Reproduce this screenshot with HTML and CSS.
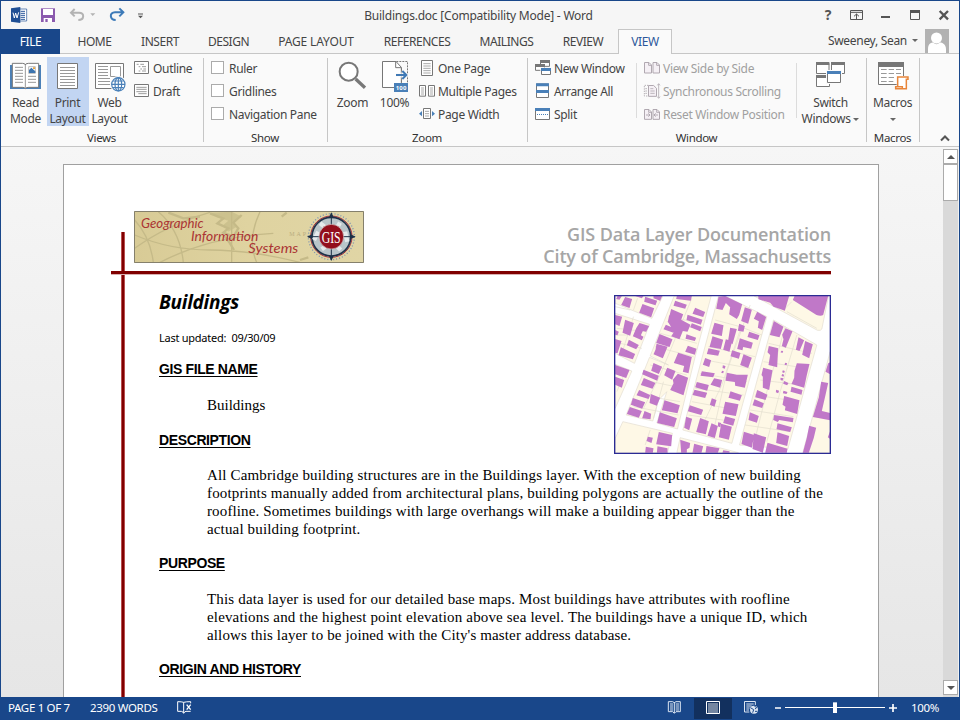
FILE: index.html
```
<!DOCTYPE html>
<html lang="en">
<head>
<meta charset="utf-8">
<title>Buildings.doc [Compatibility Mode] - Word</title>
<link rel="stylesheet" href="styles.css">
</head>
<body>
<div class="window">
  <header class="titlebar">
    <div class="quick">
      <svg width="18" height="28" viewBox="30 3 54 84"><path d="M57 27H80V63H57" fill="#fff" stroke="#1f4f94" stroke-width="2"/><path d="M62 34h13M62 40h13M62 46h13M62 52h13M62 58h13" stroke="#2b579a" stroke-width="3"/><path d="M33 25 61 21V69L33 65Z" fill="#1f4f94"/><path d="M39 38l4 16 4-15 4 15 5-17" fill="none" stroke="#fff" stroke-width="3"/></svg>
      <svg class="save" width="16" height="28" viewBox="120 3 48 84"><path d="M123 25H165V66H123Z" fill="#8b5aae"/><path d="M129 27H159V45H129ZM131 54H156V66H131Z" fill="#fff"/><path d="M136 57H143V66H136Z" fill="#8b5aae"/></svg>
      <svg class="undo" width="30" height="28" viewBox="204 3 90 84"><path d="M224 27 213 38 224 49M214 38H237C255 38 253 60 235 60" fill="none" stroke="#b3b3b3" stroke-width="6"/><path d="M271 40H286L278 48Z" fill="#b3b3b3"/></svg>
      <svg class="redo" width="18" height="28" viewBox="324 3 54 84"><path d="M358 25 370 37 358 49M369 37H345C327 37 329 60 347 60" fill="none" stroke="#3d7ab8" stroke-width="6"/></svg>
      <svg class="more" width="10" height="28" viewBox="408 3 30 84"><path d="M414 42H429" stroke="#555" stroke-width="3"/><path d="M414 47H429L421.500 55Z" fill="#555"/></svg>
    </div>
    <h1 class="title">Buildings.doc [Compatibility Mode] - Word</h1>
    <div class="controls">
      <span class="help">?</span>
      <svg width="15" height="28" viewBox="627 3 45 84"><path d="M631.500 31.500H667.500V58.500H631.500ZM631 37H668" fill="none" stroke="#555" stroke-width="3"/><path d="M649.500 57V42M642 49 649.500 42 657 49" fill="none" stroke="#555" stroke-width="3"/></svg>
      <svg class="min" width="11" height="28" viewBox="720 3 33 84"><path d="M723 51H750" stroke="#555" stroke-width="6"/></svg>
      <svg class="max" width="12" height="28" viewBox="807 3 36 84"><path d="M811.500 33H838.500V58.500H811.500Z" fill="none" stroke="#555" stroke-width="3"/><path d="M810 34.500H840" stroke="#555" stroke-width="9"/></svg>
      <svg class="close" width="12" height="28" viewBox="894 3 36 84"><path d="M899 33 924 58M924 33 899 58" stroke="#555" stroke-width="7"/></svg>
    </div>
  </header>
  <nav class="tabs">
    <span class="file">FILE</span>
    <span>HOME</span><span>INSERT</span><span>DESIGN</span><span class="wide">PAGE LAYOUT</span><span>REFERENCES</span><span>MAILINGS</span><span>REVIEW</span><span class="active">VIEW</span>
    <div class="account"><span>Sweeney, Sean</span><i class="caret"></i>
      <svg width="24" height="24" viewBox="0 0 24 24"><path d="M0 0H24V24H0Z" fill="#b2b2b2"/><circle cx="11.500" cy="9" r="5.500" fill="#fff"/><path d="M3 24V20C3 14 7 13.500 8 13.500Q11.500 17 15 13.500C17 13.500 21 15 21 20V24Z" fill="#fff"/></svg>
    </div>
  </nav>
  <section class="ribbon">
    <div class="group views">
      <div class="tools">
        <div class="big"><svg width="42" height="33" viewBox="15 180 126 99"><path d="M30 195H123V267H30Z" fill="#4a80b8"/><path d="M37 190H67Q76 190 76 195Q76 190 86 190H116V262H86Q78 262 76 266Q74 262 67 262H37Z" fill="#fff" stroke="#777" stroke-width="3"/><path d="M76 195V264" stroke="#999" stroke-width="3"/><path d="M45 202H69M45 211H69M45 220H69M45 229H69M45 238H69M45 247H69M84 229H108M84 238H108M84 247H108" stroke="#999" stroke-width="3"/><path d="M86 200H106V220H86Z" fill="#fff" stroke="#999" stroke-width="2"/><path d="M87 219V210L94 203L106 214V219Z" fill="#3d75b0"/><path d="M99 202H105V207H99Z" fill="#e8a33d"/></svg><span>Read<br>Mode</span></div>
        <div class="big selected"><svg width="42" height="33" viewBox="141 180 126 99"><path d="M172.500 190.500H232.500V265.500H172.500Z" fill="#fff" stroke="#777" stroke-width="3"/><path d="M180 202.500H225M180 211.500H225M180 220.500H225M180 229.500H225M180 238.500H225M180 247.500H225M180 256.500H225" stroke="#999" stroke-width="3"/></svg><span>Print<br>Layout</span></div>
        <div class="big"><svg width="42" height="33" viewBox="267 180 126 99"><path d="M286.500 190.500H370.500V265.500H286.500Z" fill="#fff" stroke="#777" stroke-width="3"/><path d="M294 199.500H324M294 208.500H324M294 217.500H324M294 226.500H324M294 235.500H330M294 244.500H330M294 253.500H330" stroke="#999" stroke-width="3"/><path d="M331.500 199.500H361.500V229.500H331.500Z" fill="#fff" stroke="#999" stroke-width="3"/><circle cx="355" cy="253" r="25" fill="#fafafa"/><circle cx="355" cy="253" r="21" fill="#fff"/><g fill="none" stroke="#4a80b8" stroke-width="3.500"><circle cx="355" cy="253" r="20"/><ellipse cx="355" cy="253" rx="10" ry="20"/><path d="M355 233V273M335 253H375M339 243H371M339 263H371"/></g></svg><span>Web<br>Layout</span></div>
        <div class="list">
          <div class="row"><svg width="16" height="23" viewBox="402 171 48 69"><path d="M403.500 184.500H445.500V220.500H403.500Z" fill="#fff" stroke="#777" stroke-width="3"/><path d="M410 193H416M421 193H432M416 200H421M426 200H438M421 207H426M430 207H438M416 213H421M426 213H438" stroke="#888" stroke-width="2.500"/></svg><span>Outline</span></div>
          <div class="row"><svg width="16" height="23" viewBox="402 240 48 69"><path d="M403.500 253.500H445.500V289.500H403.500Z" fill="#fff" stroke="#777" stroke-width="3"/><path d="M409 262H440M409 268H440M409 275H440M415 281H440" stroke="#888" stroke-width="2.500"/></svg><span>Draft</span></div>
        </div>
      </div>
      <h2>Views</h2>
    </div>
    <div class="group show">
      <div class="tools"><div class="list">
        <div class="row"><i class="box"></i><span>Ruler</span></div>
        <div class="row"><i class="box"></i><span>Gridlines</span></div>
        <div class="row"><i class="box"></i><span>Navigation Pane</span></div>
      </div></div>
      <h2>Show</h2>
    </div>
    <div class="group zoom">
      <div class="tools">
        <div class="big"><svg width="42" height="33" viewBox="36 180 126 99"><path d="M107 237 135 263" stroke="#777" stroke-width="10"/><circle cx="86" cy="215" r="27" fill="#fff" stroke="#777" stroke-width="6"/></svg><span>Zoom</span></div>
        <div class="big"><svg width="42" height="33" viewBox="162 180 126 99"><path d="M187.500 184.500H228L244 202V262.500H187.500Z" fill="#fff" stroke="#777" stroke-width="3"/><path d="M227 184V203H244" fill="none" stroke="#777" stroke-width="3"/><path d="M229 184.500H262.500V252M244.500 205V250" fill="none" stroke="#777" stroke-width="3" stroke-dasharray="6 3"/><path d="M228 225H258M247 213 259 225 247 237" fill="none" stroke="#fafafa" stroke-width="10"/><path d="M228 225H258M247 213 259 225 247 237" fill="none" stroke="#4079b5" stroke-width="6"/><path d="M222 249H264V276H222Z" fill="#4a80b8"/><text class="badge" x="227" y="270" textLength="32">100</text></svg><span>100%</span></div>
        <div class="list">
          <div class="row"><svg width="18" height="23" viewBox="294 171 54 69"><path d="M304.500 181.500H337.500V226.500H304.500Z" fill="#fff" stroke="#777" stroke-width="3"/><path d="M310 191H332M310 198H332M310 205H332M310 212H332M310 219H332" stroke="#999" stroke-width="2.500"/></svg><span>One Page</span></div>
          <div class="row"><svg width="18" height="23" viewBox="294 240 54 69"><path d="M298.500 256.500H316.500V288.500H298.500ZM325.500 256.500H343.500V288.500H325.500Z" fill="#fff" stroke="#777" stroke-width="3"/><path d="M303 264H312M303 270H312M303 276H312M303 282H312M330 264H339M330 270H339M330 276H339M330 282H339" stroke="#999" stroke-width="2.500"/></svg><span>Multiple Pages</span></div>
          <div class="row"><svg width="18" height="23" viewBox="294 309 54 69"><path d="M310.500 325.500H331.500V355.500H310.500Z" fill="#fff" stroke="#777" stroke-width="3"/><path d="M315 334H327M315 341H327M315 348H327" stroke="#999" stroke-width="2.500"/><path d="M306 333V349L297 341ZM336 333V349L345 341Z" fill="#4a80b8"/></svg><span>Page Width</span></div>
        </div>
      </div>
      <h2>Zoom</h2>
    </div>
    <div class="group win">
      <div class="tools">
        <div class="list">
          <div class="row"><svg width="18" height="23" viewBox="642 171 54 69"><path d="M661.500 183H688.500V199H661.500ZM646.500 195H673.500V211H646.500Z" fill="#fff" stroke="#777" stroke-width="3"/><path d="M660 180H690V189H660ZM645 192H675V201H645Z" fill="#777"/><path d="M661 202H694V225H661Z" fill="#fafafa"/><path d="M664.500 207H691.500V223.500H664.500Z" fill="#fff" stroke="#777" stroke-width="3"/><path d="M663 204H693V213H663Z" fill="#4a80b8"/></svg><span>New Window</span></div>
          <div class="row"><svg width="18" height="23" viewBox="642 240 54 69"><path d="M649.500 252H685.500V292.500H649.500Z" fill="#fff" stroke="#777" stroke-width="3"/><path d="M648 250H687V259H648ZM648 270H687V279H648Z" fill="#4a80b8"/></svg><span>Arrange All</span></div>
          <div class="row"><svg width="18" height="23" viewBox="642 309 54 69"><path d="M646.500 327H688.500V358.500H646.500Z" fill="#fff" stroke="#777" stroke-width="3"/><path d="M645 324H690V333H645Z" fill="#4a80b8"/><path d="M651 343.500H687" stroke="#4a80b8" stroke-width="3" stroke-dasharray="3 3"/></svg><span>Split</span></div>
        </div>
        <div class="list disabled">
          <div class="row"><svg width="18" height="23" viewBox="9 171 54 69"><path d="M13.500 187.500H27L34.500 195V219H13.500ZM39 187.500H51L58.500 195V219H39Z M26 188V196H34M50 188V196H58" fill="#f5f0f5" stroke="#b0a8b0" stroke-width="3"/></svg><span>View Side by Side</span></div>
          <div class="row"><svg width="18" height="23" viewBox="9 240 54 69"><path d="M25 256H13V288H25" fill="none" stroke="#b5b0b5" stroke-width="3" stroke-dasharray="4 3"/><path d="M25.500 256.500H41L49.500 265V289H25.500Z" fill="#f5f0f5" stroke="#b0a8b0" stroke-width="3"/><path d="M31 266H40M31 273H44M31 280H44M16 266H21M16 273H21M16 280H21M56 252V293M52 256 56 251 60 256M52 290 56 295 60 290" fill="none" stroke="#b0a8b0" stroke-width="2.500"/></svg><span>Synchronous Scrolling</span></div>
          <div class="row"><svg width="18" height="23" viewBox="9 309 54 69"><path d="M13.500 328.500H27L34.500 336V358H13.500ZM39 328.500H51L58.500 336V358H39Z" fill="#f5f0f5" stroke="#b0a8b0" stroke-width="3"/><path d="M18 345H30M25 340 30 345 25 350M54 345H42M47 340 42 345 47 350M26 329V337H34M50 329V337H58" fill="none" stroke="#a8a0a8" stroke-width="2.500"/></svg><span>Reset Window Position</span></div>
        </div>
        <div class="big switch"><svg width="68" height="33" viewBox="471 180 204 99"><path d="M529.500 190H567V220.500H529.500ZM574.500 190H613.500V220.500H574.500ZM529.500 229H568.500V259.500H529.500Z" fill="#fff" stroke="#777" stroke-width="3"/><path d="M528 186H568V195H528ZM573 186H615V195H573ZM528 225H568V234H528Z" fill="#777"/><path d="M558 210H606V252H558Z" fill="#fafafa"/><path d="M562.500 215H601.500V247.500H562.500Z" fill="#fff" stroke="#777" stroke-width="3"/><path d="M561 213H603V222H561Z" fill="#4a80b8"/></svg><span>Switch<br>Windows <i class="caret"></i></span></div>
      </div>
      <h2>Window</h2>
    </div>
    <div class="group macros">
      <div class="tools"><div class="big"><svg width="52" height="33" viewBox="681 180 156 99"><path d="M715.500 190H790.500V253.500H715.500Z" fill="#fff" stroke="#777" stroke-width="3"/><path d="M714 186H792V201H714Z" fill="#777"/><path d="M723 208.500H740M746 208.500H762M768 208.500H783M723 220.500H740M746 220.500H762M768 220.500H783M723 232.500H740M746 232.500H762M723 244.500H740M746 244.500H760" stroke="#999" stroke-width="3"/><path d="M770 228H806V240H799V268H764V258H770Z" fill="#fafafa"/><path d="M773 259V231H804V238H799V266H767V260H787V266" fill="#fff" stroke="#e8853a" stroke-width="4.500"/></svg><span>Macros<br><i class="caret"></i></span></div></div>
      <h2>Macros</h2>
    </div>
    <svg class="collapse" width="10" height="8" viewBox="0 0 10 8"><path d="M1 6.500 5 2.500 9 6.500" fill="none" stroke="#555" stroke-width="2"/></svg>
  </section>
  <main class="workspace">
    <article class="page">
      <div class="vrule"></div>
      <div class="sheet">
        <div class="letterhead">
          <svg class="banner" width="230" height="52" viewBox="102 33 690 156">
            <defs><linearGradient id="sand" x2="1"><stop offset="0" stop-color="#d8cb96"/><stop offset=".5" stop-color="#dfd3a0"/><stop offset="1" stop-color="#e0d5a5"/></linearGradient></defs>
            <path d="M102 33H792V189H102Z" fill="url(#sand)"/>
            <g fill="none" stroke="#c5ba88" stroke-width="4"><path d="M104 145Q200 75 330 37M104 60Q150 110 160 187M175 35Q240 90 250 187M104 105Q210 150 330 150T600 187M395 35V187M480 35Q440 120 470 187M180 187Q330 110 520 100"/><path d="M330 40L370 55 352 70 385 85 370 98 400 110 415 85 400 68 425 45M375 110L390 130 402 150M205 38L250 55 300 50M545 50L560 38M600 180L625 172" stroke-width="7"/></g>
            <path d="M335 38L395 35 425 50 400 65 410 80 385 95 370 75 385 62 350 52Z" fill="#c5ba88" opacity=".7"/>
            <text x="568" y="107" class="faint" textLength="50">MAP</text>
            <g class="script"><text x="123" y="83" textLength="188" lengthAdjust="spacingAndGlyphs">Geographic</text><text x="273" y="124" textLength="202" lengthAdjust="spacingAndGlyphs">Information</text><text x="445" y="160" textLength="150" lengthAdjust="spacingAndGlyphs">Systems</text></g>
            <circle cx="694" cy="110" r="69" fill="none" stroke="#7d94b3" stroke-width="4" stroke-dasharray="3 6"/>
            <circle cx="694" cy="110" r="62" fill="#a8b5bd" stroke="#a62a35" stroke-width="3"/><circle cx="694" cy="110" r="58" fill="#b9c5ca" stroke="#1e3148" stroke-width="5"/>
            <path d="M660 70 680 85M720 68 710 85M735 95 742 125M655 95 642 120M665 148 680 137M722 150 710 138" stroke="#e5eaec" stroke-width="13"/>
            <path d="M694 37 701 52H687ZM694 183 701 168H687ZM621 110 636 103V117ZM767 110 752 103V117Z" fill="#1e3148"/><path d="M694 40V180M624 110H764" stroke="#1e3148" stroke-width="3"/>
            <circle cx="694" cy="110" r="37" fill="#930f1d" stroke="#d8d0d0" stroke-width="2"/><text class="gis" x="665" y="130" textLength="57" lengthAdjust="spacingAndGlyphs">GIS</text>
            <path d="M103.500 34.500H790.500V187.500H103.500Z" fill="none" stroke="#85806c" stroke-width="3"/>
          </svg>
          <div class="heading"><div class="h1">GIS Data Layer Documentation</div><div class="h2">City of Cambridge, Massachusetts</div></div>
        </div>
        <div class="hrule"></div>
        <div class="content">
          <svg class="map" width="217" height="159" viewBox="42 30 650 477">
            <path d="M42 30H692V507H42Z" fill="#fff"/>
            <g fill="#fef8e6" stroke="#e3ddd0" stroke-width="2"><path d="M45 33H188L155 100 45 55ZM45 85 148 118 103 235 45 205ZM45 238 95 258 45 370ZM222 33H333L285 215 232 432 170 414 200 320 175 345 158 408 78 390 130 262 148 217 205 240 150 213ZM355 33H375L500 95 395 475 248 435ZM520 105 650 180 563 492 418 480ZM462 33H685L665 132Q662 138 652 136ZM690 200 608 503H690ZM68 410 217 445 202 503H45V460ZM240 458 415 503H230Z"/></g>
            <g fill="none" stroke="#e2decf" stroke-width="2"><path d="M112 40 100 75M45 65 90 75M100 95 62 215M50 130 140 140M60 175 125 190M275 40 180 270 130 370M200 110 295 130M180 145 290 175M165 185 280 215M230 100 300 115M150 240 260 270M130 285 250 310M115 330 240 350M100 365 235 390M190 290 160 400M450 60 380 260 335 460M345 105 420 125 485 150M325 185 465 215M315 225 450 250M300 265 440 290M285 310 430 330M275 350 410 375M265 390 400 410M425 120 365 300 295 445M555 125 500 320 460 480M505 175 635 205M490 230 620 250M480 285 605 300M465 330 595 350M450 375 580 395M435 420 570 440M590 150 540 320 500 470M550 75 575 50M560 80 650 130M150 435 135 480M45 150H80M75 260 50 320"/></g>
            <g fill="#c078c8">
              <path d="M52 33H65L58 44 48 42ZM75 36 96 42 88 69 63 60ZM105 33 130 33 125 40ZM135 35 171 47 166 61 132 50ZM160 33H186L180 47 160 40ZM127 57 162 70 153 97 117 83ZM45 90 66 95 58 123 45 118ZM75 104 101 114 90 152 67 143ZM118 114 147 123 138 140 128 138 122 151 130 155 125 166 98 154 108 130ZM45 135 56 140 52 151 45 149ZM45 162 64 168 52 205 45 203ZM86 164 116 180 108 193 80 181ZM62 187 105 207 98 223 55 211ZM45 240 88 255 78 279 45 268ZM45 275 72 285 65 308 45 299Z"/>
              <path d="M230 33H275L272 47 228 42ZM225 47 260 59 255 71 220 62ZM213 72 249 88 243 104 208 92ZM207 91 240 103 271 119 262 140 248 138 238 163 213 154 222 140 203 110ZM285 68 315 81 309 96 277 86ZM262 89 307 104 302 119 259 105ZM275 115 305 126 300 139 270 127ZM197 119 229 133 224 145 190 133ZM259 148 288 158 284 168 256 161ZM178 147 217 163 208 186 168 174ZM169 176 202 185 196 200 188 220 160 208 166 194ZM263 182 289 191 284 209 255 200ZM234 203 275 216 265 265 248 260 252 243 221 234ZM160 234 186 245 176 267 153 257ZM130 254 176 272 171 287 126 268ZM201 248 226 258 216 284 192 271ZM233 266 264 278 250 331 210 315 220 295 218 284ZM131 279 166 294 157 311 122 300ZM117 315 150 330 145 342 109 331ZM98 339 135 352 126 371 92 359ZM152 327 180 338 170 362 148 354ZM89 366 125 378 116 398 80 387ZM133 378 153 386 151 403 126 400ZM193 346 239 361 232 385 185 376ZM179 382 230 400 222 426 171 414Z"/>
              <path d="M355 35 375 33 426 58 417 90 410 102 387 88 390 67 377 54 367 75 348 71ZM434 67 455 74 444 116 423 108ZM471 80 498 96 486 135 473 128 476 109 461 101ZM343 113 370 121 365 153 333 146ZM417 116 434 123 430 140 413 137ZM390 128 410 132 397 178 384 166ZM447 140 478 151 473 165 442 156ZM337 154 369 164 362 192 328 186ZM377 163 396 169 388 200 369 194ZM419 160 458 173 453 191 429 186 427 196 411 192ZM325 190 359 197 354 212 320 207ZM396 196 421 204 416 221 391 214ZM430 208 455 218 444 249 420 240ZM315 219 333 226 327 246 308 239ZM368 241 376 243 374 251 367 249ZM366 257 371 259 369 265 363 263ZM305 259 344 265 339 277 301 272ZM380 263 410 269 443 269 434 308 405 302 404 291 376 287ZM342 280 366 285 360 308 331 299ZM290 291 326 300 321 317 285 307ZM283 314 321 323 315 339 277 330ZM391 319 425 331 419 347 385 338ZM335 340 349 345 343 365 329 359ZM375 350 415 358 407 393 367 386ZM269 361 309 374 303 390 263 379ZM375 394 405 402 399 422 369 414ZM258 395 276 401 267 436 252 428ZM300 399 326 409 317 448 288 441ZM334 415 353 423 344 459 322 452ZM363 416 395 425 386 464 356 457ZM354 412 363 414 360 427 353 424Z"/>
              <path d="M474 33H567L554 77 540 72 520 65 510 53 475 43ZM583 33H684L669 90Q662 94 649 90L578 45ZM521 108 550 125 538 157 509 150ZM556 130 577 139 557 188 545 183 550 163 546 149ZM595 157 612 166 598 198 587 194ZM615 168 638 178 627 220 606 209ZM506 183 534 190 531 247 505 240 510 210 502 202ZM544 197 549 198 547 204 541 202ZM555 233 561 235 559 241 553 239ZM590 235 628 237 620 270 612 308 574 297 582 278 583 257ZM489 248 517 256 507 315 488 308 488 275 484 270ZM548 256 554 258 552 264 546 262ZM546 267 552 269 550 275 544 273ZM541 278 550 280 547 287 541 285ZM552 288 565 294 561 301 549 296ZM574 305 607 315 604 329 571 320ZM528 314 537 317 534 325 527 322ZM550 317 562 321 559 327 548 325ZM471 315 502 329 496 345 465 337ZM463 343 491 355 486 369 457 361ZM552 333 598 346 591 387 554 376 556 365 547 359ZM449 382 476 393 470 413 445 405ZM522 390 580 399 578 412 537 405 533 411 519 405ZM532 415 575 427 570 441 529 433ZM431 440 462 450 455 488 424 477ZM461 445 498 457 488 503 457 492ZM532 442 567 453 561 483 528 474ZM502 473 562 491 560 503H495Z"/>
              <path d="M690 232V268L676 260 684 235ZM663 290 684 294 676 330 665 378 690 384V406L638 396 656 337ZM627 422 648 428 641 458 626 503H608L620 458ZM690 438V462L683 457ZM143 455 158 458 154 474 139 468ZM176 441 216 450 213 484 168 478ZM137 485 160 490 158 503H135ZM172 484 202 490V503H170ZM240 464 270 474 268 488 260 493V503H243ZM282 476 309 484 304 503H277ZM319 483 358 490 353 503H316ZM369 496 388 499V503H367Z"/>
            </g>
            <path d="M43.500 31.500H690.500V505.500H43.500Z" fill="none" stroke="#2b2b94" stroke-width="4"/>
          </svg>
          <h3 class="doc-title">Buildings</h3>
          <p class="updated">Last updated:&nbsp; 09/30/09</p>
          <h4>GIS FILE NAME</h4>
          <p class="text">Buildings</p>
          <h4 class="tight">DESCRIPTION</h4>
          <p class="text long">All Cambridge building structures are in the Buildings layer. With the exception of new building<br><span class="loose">footprints manually added from architectural plans, building polygons are actually the outline of the</span><br><span class="close-set">roofline. Sometimes buildings with large overhangs will make a building appear bigger than the</span><br>actual building footprint.</p>
          <h4>PURPOSE</h4>
          <p class="text long"><span class="loose">This data layer is used for our detailed base maps. Most buildings have attributes with roofline</span><br><span class="loose">elevations and the highest point elevation above sea level. The buildings have a unique ID, which</span><br><span class="close-set">allows this layer to be joined with the City's master address database.</span></p>
          <h4>ORIGIN AND HISTORY</h4>
        </div>
      </div>
    </article>
    <aside class="scroll"><i class="arrow up"></i><div class="thumb"></div><i class="arrow down"></i></aside>
  </main>
  <footer class="status">
    <span class="pages">PAGE 1 OF 7</span><span class="words">2390 WORDS</span>
    <svg class="proof" width="15" height="22" viewBox="533 51 45 66"><path d="M553 67Q547 65 535 65V94H546Q552 95 553 100Q555 95 560 94H574M553 67V98M553 67Q560 65 574 65V70" fill="none" stroke="#fff" stroke-width="3"/><path d="M562 74 574 89M574 74 562 89" stroke="#fff" stroke-width="4"/></svg>
    <div class="modes">
      <svg class="read" width="30" height="21" viewBox="60 84 90 63"><path d="M85 95H98L103 98 108 95H121V125H108L103 130 98 125H85ZM103 96V129" fill="none" stroke="#dbe5f2" stroke-width="3"/><path d="M90 102H99M90 108H99M90 114H99M90 120H99M107 102H117M107 108H117M107 114H117M107 120H117" stroke="#dbe5f2" stroke-width="3"/></svg>
      <svg class="on" width="38" height="21" viewBox="162 84 114 63"><path d="M199.500 94.500H238.500V130.500H199.500Z" fill="none" stroke="#fff" stroke-width="3"/><path d="M204 102H234M204 108H234M204 114H234M204 120H234M204 126H234" stroke="#fff" stroke-width="2.500"/></svg>
      <svg width="38" height="21" viewBox="276 84 114 63"><path d="M328 126H313.500V94.500H346V105" fill="none" stroke="#dbe5f2" stroke-width="3"/><path d="M319 102H341M319 108H335M319 114H329M319 120H327" stroke="#dbe5f2" stroke-width="3"/><circle cx="342" cy="119" r="12" fill="#dbe5f2"/><path d="M333 114 341 119 338 128M343 108 350 113 345 117M345 124H352" fill="none" stroke="#19478a" stroke-width="3"/></svg>
      <svg class="slider" width="130" height="21" viewBox="390 84 390 63"><path d="M435 112.500H735" stroke="#fff" stroke-width="3"/><path d="M405 114H423M747 114H771M759 102V126" fill="none" stroke="#fff" stroke-width="5"/><path d="M579 97H591V129H579Z" fill="#fff"/></svg>
      <span class="pct">100%</span>
    </div>
  </footer>
</div>
</body>
</html>
```
FILE: styles.css
```
*{box-sizing:border-box}
body{margin:0;width:960px;height:720px;overflow:hidden;font:12px/16px "Noto Sans","Open Sans",sans-serif;letter-spacing:-.32px;color:#444;background:#f6f6f6}
svg{display:block;flex:none}
h1,h2,h3,h4,p{margin:0;font-weight:400}
.window{width:960px;height:720px;display:flex;flex-direction:column;border:1px solid #19478a}
.titlebar{height:28px;flex:none;display:grid;grid-template-columns:300px 1fr 300px;background:#f6f6f6}
.quick{display:flex;padding-left:9px}
.save{margin-left:12px}.undo{margin-left:12px}.redo{margin-left:10px}.more{margin-left:10px}
.title{font-size:12px;line-height:29px;text-align:center;padding-right:3px;white-space:nowrap;letter-spacing:-.22px}
.controls{display:flex;justify-content:flex-end;padding-right:9px}
.help{font-weight:700;font-size:14px;line-height:28px;width:12px;color:#555;margin-right:15px;text-align:center}
.min{margin-left:16px}.max{margin-left:18px}.close{margin-left:17px}
.tabs{height:25px;flex:none;display:grid;grid-template-columns:62px 63px 68px 69px 106px 96px 83px 70px 54px 1fr;background:linear-gradient(#c6c6c6,#c6c6c6) bottom/100% 1px no-repeat #f6f6f6;text-align:center;line-height:25px;white-space:nowrap;letter-spacing:-.45px}
.wide{letter-spacing:-.15px}
.file{background:#19478a;color:#fff;width:59px}
.active{border:1px solid #c6c6c6;border-bottom:0;background:#fafafa;color:#2b579a;line-height:23px}
.account{display:flex;justify-content:flex-end;padding-right:10px;line-height:24px;letter-spacing:-.3px;height:24px}
.account .caret{margin:10px 7px 0 5px}
.caret{display:inline-block;width:0;height:0;border:3px solid transparent;border-top-color:#666;border-bottom:0;vertical-align:2px}
.ribbon{height:93px;flex:none;background:#fafafa;border-bottom:1px solid #c6c6c6;display:flex;position:relative;white-space:nowrap}
.group{display:flex;flex-direction:column;padding-top:3px;background:linear-gradient(#c6c6c6,#c6c6c6) right 4px/1px 84px no-repeat}
.group h2{font-size:11.500px;line-height:16px;text-align:center;color:#333;margin-top:1px;padding-right:2px}
.views{width:203px}.show{width:124px}.zoom{width:200px}.win{width:339px}.macros{width:53px}
.tools{display:flex;height:72px}
.views .tools{padding-left:4px}.show .tools{padding-left:7px}.zoom .tools{padding-left:4px}.win .tools{padding-left:6px}
.big{width:42px;height:69px;padding-top:3px;text-align:center}
.big span{display:block;margin-top:2px;margin-right:1px}
.selected{background:#c2d5f2}
.list{display:flex;flex-direction:column}
.views .list{margin-left:3px}.zoom .list{margin-left:2px}
.row{display:flex;height:23px;line-height:24px;gap:2px}
.views .row{gap:3px}
.show .row{gap:5px}
.box{width:13px;height:13px;margin-top:4px;border:1px solid #ababab;background:#fff}
.win .list:first-child{width:103px;height:64px;background:linear-gradient(#dcdcdc,#dcdcdc) right 6px/1px 55px no-repeat}
.win .disabled{color:#a0a0a0;margin-left:6px;width:154px;height:64px;background:linear-gradient(#dcdcdc,#dcdcdc) right 6px/1px 55px no-repeat}
.switch{width:68px}.macros .big{width:52px}
.badge{font:700 18px "Noto Sans",sans-serif;fill:#fff;letter-spacing:0}
.collapse{position:absolute;right:9px;bottom:4px}
.workspace{flex:1;min-height:0;display:flex;justify-content:space-between;background:linear-gradient(#f6f6f6,#e6e6e6);padding-left:62px}
.page{width:816px;margin-top:17px;background:#fff;border:1px solid #a0a0a0;border-bottom:0;display:grid;grid-template-columns:47px 1fr;overflow:hidden;color:#000;letter-spacing:0}
.page>*{grid-row:1}
.vrule{grid-column:1/3;width:4px;margin:67px 0 0 57px;background:#800000;border:solid #b85050;border-width:0 1px}
.sheet{grid-column:2}
.letterhead{display:flex;justify-content:space-between;padding:46px 47px 0 23px;height:106px}
.heading{font:600 18px/22px "Open Sans",sans-serif;color:#a6a6a6;text-align:right;margin-top:12px;white-space:nowrap}
.h1{letter-spacing:-.12px}.h2{letter-spacing:-.17px}
.hrule{width:720px;height:3px;background:#800000;box-shadow:0 1px #d9b0b0}
.content{padding:0 47px 0 48px}
.map{float:right;margin-top:21px}
.doc-title{font:italic 700 19px/24px "Open Sans",sans-serif;padding-top:16px;letter-spacing:-.25px}
.updated{font-size:11px;line-height:16px;margin-top:16px;letter-spacing:-.25px}
h4{font:700 14px/18px "Liberation Sans",sans-serif;letter-spacing:-.38px;text-decoration:underline;text-underline-offset:2px;margin:14px 0 18px}
.tight{margin-bottom:17px}
.text{font:15px/18px "Liberation Serif",serif;margin-left:48px;white-space:nowrap}
.long{letter-spacing:.15px}
.loose{letter-spacing:.16px}.close-set{letter-spacing:.128px}
.text+h4{margin-top:17px}
.long+h4{margin-top:16px}
.script{font:italic 38px Lato,sans-serif;fill:#ab3434;letter-spacing:0}
.faint{font:18px "Liberation Serif",serif;fill:#b9ad80}
.gis{font:52px "Liberation Serif",serif;fill:#fff}
.scroll{width:16px;border-right:1px solid #f1f1f1;background:#d9d9d9;margin-top:2px;display:flex;flex-direction:column}
.arrow{height:15px;border:1px solid #ababab;background:#fff;display:flex;align-items:center;justify-content:center}
.arrow:after{content:"";border:4px solid transparent}
.up:after{border-bottom-color:#555;border-top:0}
.down{margin-top:auto;margin-bottom:2px}
.down:after{border-top-color:#555;border-bottom:0}
.thumb{height:37px;background:#fff;border:1px solid #ababab}
.status{height:22px;flex:none;background:#19478a;color:#fff;display:flex;line-height:22px;font-size:11.500px;white-space:nowrap}
.pages{margin-left:7px;width:82px}.words{width:87px}
.modes{display:flex;margin-left:auto;padding:1px 19px 0 0;line-height:20px}
.read{margin-right:4px}
.on{background:#12305e}
.pct{width:29px;margin-left:11px}
```
